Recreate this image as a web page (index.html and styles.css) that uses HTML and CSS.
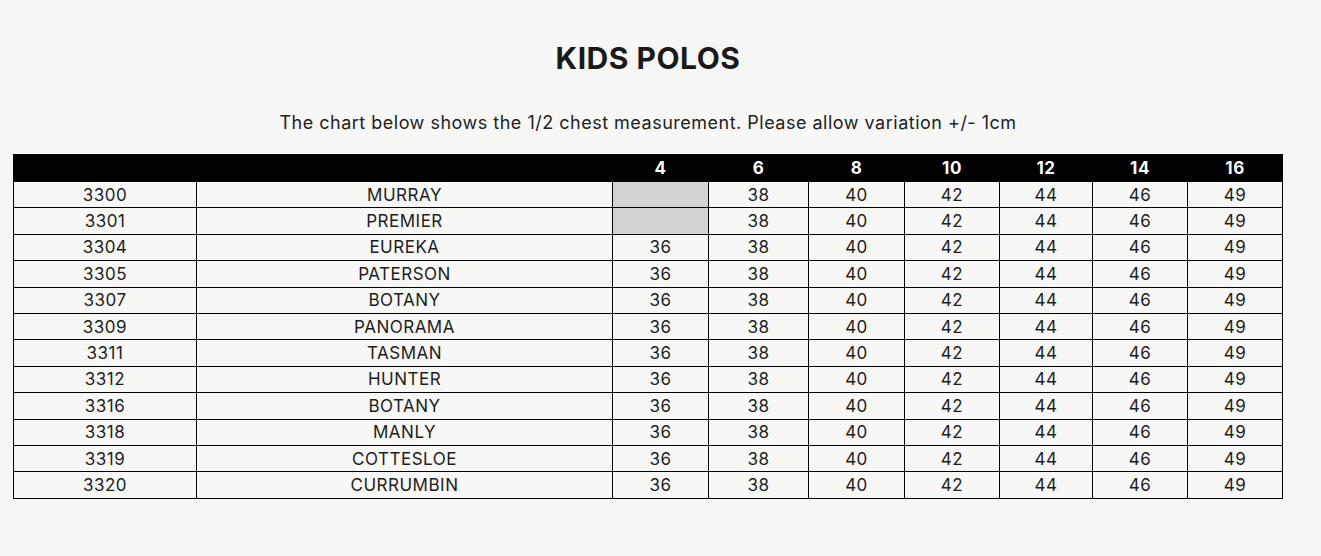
FILE: index.html
```html
<!DOCTYPE html>
<html>
<head>
<meta charset="utf-8">
<link rel="stylesheet" href="styles.css">
</head>
<body>
<div class="page">
  <h1 class="title">KIDS POLOS</h1>
  <p class="intro">The chart below shows the 1/2 chest measurement. Please allow variation +/- 1cm</p>
  <table class="chart">
    <colgroup>
      <col class="c-code"><col class="c-name"><col class="c-s1"><col class="c-s2"><col class="c-s3"><col class="c-s4"><col class="c-s5"><col class="c-s6"><col class="c-s7">
    </colgroup>
    <thead>
      <tr><th></th><th></th><th>4</th><th>6</th><th>8</th><th>10</th><th>12</th><th>14</th><th>16</th></tr>
    </thead>
    <tbody>
      <tr><td>3300</td><td>MURRAY</td><td class="na"></td><td>38</td><td>40</td><td>42</td><td>44</td><td>46</td><td>49</td></tr>
      <tr><td>3301</td><td>PREMIER</td><td class="na"></td><td>38</td><td>40</td><td>42</td><td>44</td><td>46</td><td>49</td></tr>
      <tr><td>3304</td><td>EUREKA</td><td>36</td><td>38</td><td>40</td><td>42</td><td>44</td><td>46</td><td>49</td></tr>
      <tr><td>3305</td><td>PATERSON</td><td>36</td><td>38</td><td>40</td><td>42</td><td>44</td><td>46</td><td>49</td></tr>
      <tr><td>3307</td><td>BOTANY</td><td>36</td><td>38</td><td>40</td><td>42</td><td>44</td><td>46</td><td>49</td></tr>
      <tr><td>3309</td><td>PANORAMA</td><td>36</td><td>38</td><td>40</td><td>42</td><td>44</td><td>46</td><td>49</td></tr>
      <tr><td>3311</td><td>TASMAN</td><td>36</td><td>38</td><td>40</td><td>42</td><td>44</td><td>46</td><td>49</td></tr>
      <tr><td>3312</td><td>HUNTER</td><td>36</td><td>38</td><td>40</td><td>42</td><td>44</td><td>46</td><td>49</td></tr>
      <tr><td>3316</td><td>BOTANY</td><td>36</td><td>38</td><td>40</td><td>42</td><td>44</td><td>46</td><td>49</td></tr>
      <tr><td>3318</td><td>MANLY</td><td>36</td><td>38</td><td>40</td><td>42</td><td>44</td><td>46</td><td>49</td></tr>
      <tr><td>3319</td><td>COTTESLOE</td><td>36</td><td>38</td><td>40</td><td>42</td><td>44</td><td>46</td><td>49</td></tr>
      <tr><td>3320</td><td>CURRUMBIN</td><td>36</td><td>38</td><td>40</td><td>42</td><td>44</td><td>46</td><td>49</td></tr>
    </tbody>
  </table>
</div>
</body>
</html>
```
FILE: styles.css
```css
html, body {
  margin: 0;
  padding: 0;
  background: #f7f7f5;
}
body {
  font-family: Inter, "Liberation Sans", sans-serif;
  color: #1e1e1e;
}
.page {
  width: 1296px;
  padding: 0 13px;
  box-sizing: border-box;
}
.title {
  margin: 0;
  padding-top: 40px;
  height: 36px;
  line-height: 36px;
  text-align: center;
  font-size: 30px;
  font-weight: 700;
  letter-spacing: 0.5px;
  color: #1a1a1a;
}
.intro {
  margin: 0;
  padding-top: 36px;
  height: 22px;
  line-height: 22px;
  text-align: center;
  font-size: 18px;
  letter-spacing: 0.5px;
  color: #222;
}
.chart {
  margin-top: 20px;
  width: 1269px;
  border-collapse: collapse;
  table-layout: fixed;
  font-size: 17px;
  letter-spacing: 0.5px;
}
.c-code { width: 183px; }
.c-name { width: 416px; }
.c-s1 { width: 96px; }
.c-s2 { width: 100px; }
.c-s3 { width: 96px; }
.c-s4 { width: 95px; }
.c-s5 { width: 93px; }
.c-s6 { width: 95px; }
.c-s7 { width: 95px; }
.chart th {
  background: #000;
  color: #fff;
  font-weight: 700;
  height: 26px;
  padding: 0;
  border: 1px solid #000;
  text-align: center;
}
.chart td {
  border: 1px solid #000;
  height: 25.4px;
  padding: 0;
  text-align: center;
  line-height: 20px;
}
.chart td.na {
  background: #d3d3d3;
}
```
